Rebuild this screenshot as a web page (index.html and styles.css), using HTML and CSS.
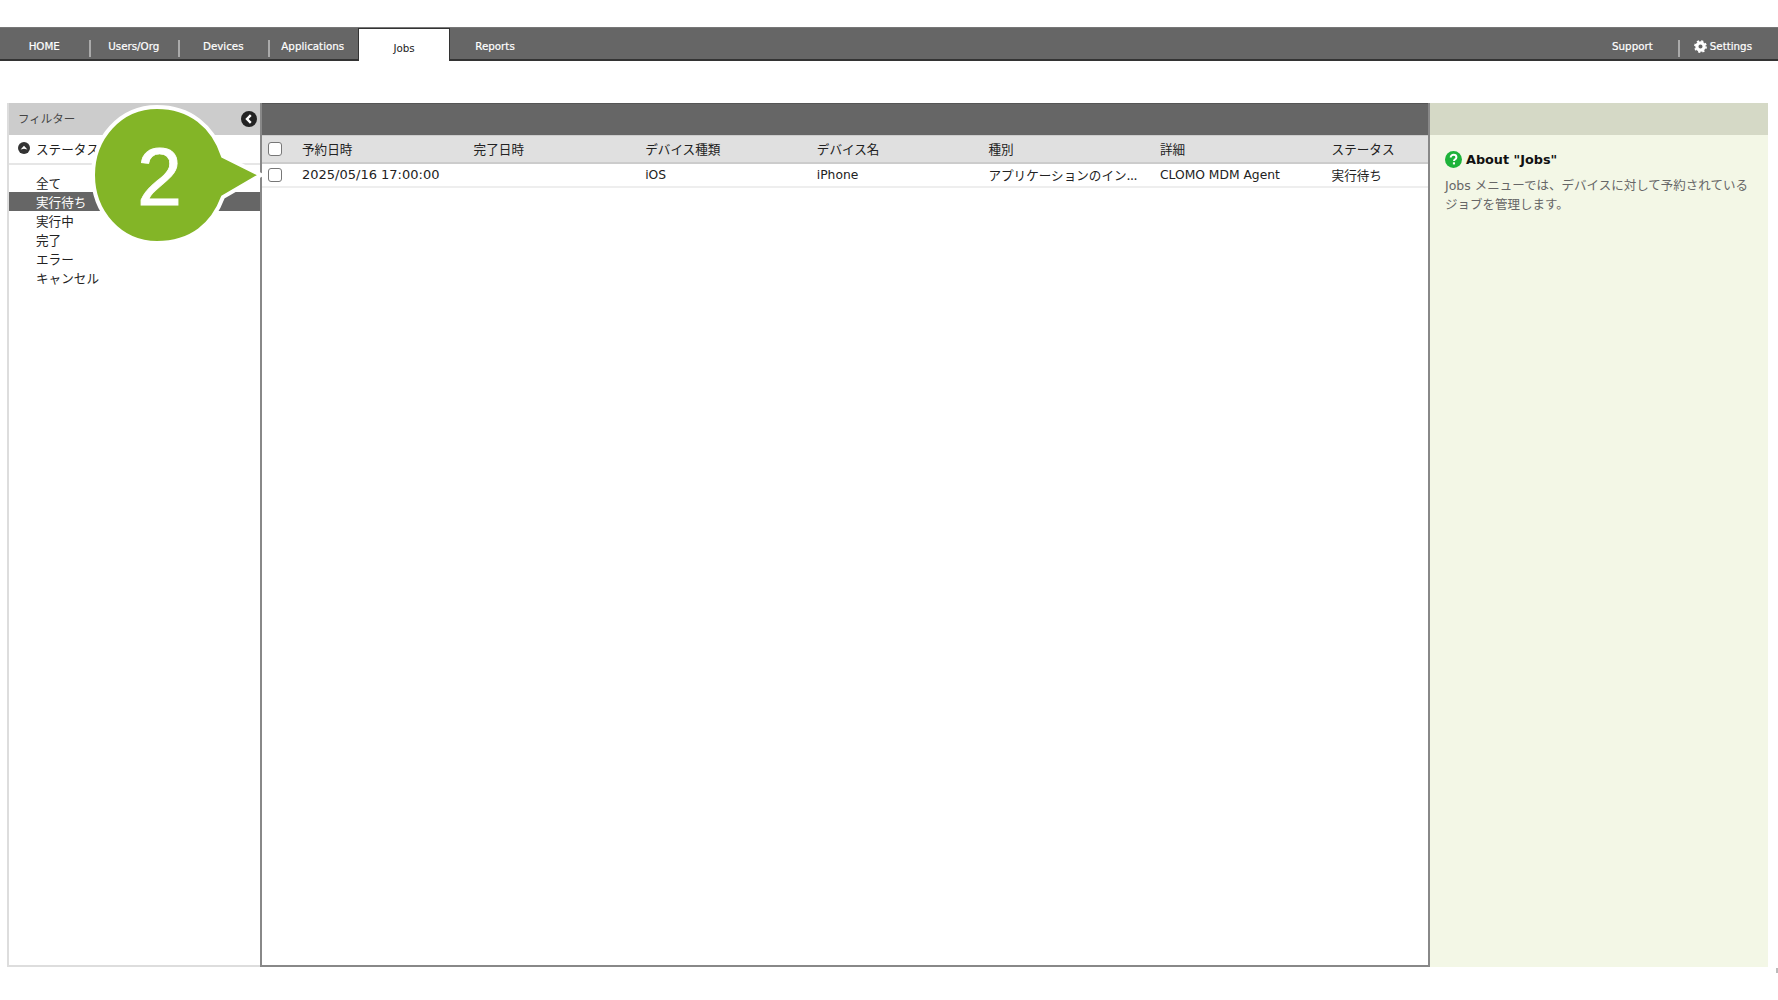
FILE: index.html
```html
<!DOCTYPE html>
<html lang="ja">
<head>
<meta charset="utf-8">
<title>Jobs</title>
<link rel="stylesheet" href="styles.css">
</head>
<body>
<nav class="nav">
  <a class="tab sep">HOME</a>
  <a class="tab sep">Users/Org</a>
  <a class="tab sep">Devices</a>
  <a class="tab">Applications</a>
  <a class="tab active">Jobs</a>
  <a class="tab last">Reports</a>
  <span class="nav-space"></span>
  <a class="nav-right sep-right">Support</a>
  <a class="nav-right settings">
    <svg class="gear" viewBox="0 0 14 14"><circle cx="7" cy="7" r="3.900" fill="none" stroke="#fff" stroke-width="3.400"/><circle cx="7" cy="7" r="6" fill="none" stroke="#fff" stroke-width="1.800" stroke-dasharray="2.400 2.310"/></svg>
    Settings
  </a>
</nav>

<main class="panels">
  <aside class="filter">
    <header class="filter-head">
      <span>フィルター</span>
      <svg class="collapse" viewBox="0 0 16 16"><circle cx="8" cy="8" r="8" fill="#222"/><path d="M9.800 4.200 6 8l3.800 3.800" fill="none" stroke="#fff" stroke-width="2.400"/></svg>
    </header>
    <div class="filter-section">
      <svg class="up" viewBox="0 0 12 12"><circle cx="6" cy="6" r="6" fill="#333"/><path d="M2.600 7.600 6 3.800l3.400 3.800-3.400-.8z" fill="#fff"/></svg>
      <span>ステータス</span>
    </div>
    <ul class="filter-list">
      <li>全て</li>
      <li class="selected">実行待ち</li>
      <li>実行中</li>
      <li>完了</li>
      <li>エラー</li>
      <li>キャンセル</li>
    </ul>
  </aside>

  <section class="jobs">
    <div class="jobs-bar"></div>
    <table class="grid">
      <colgroup>
        <col class="c-check"><col class="c-col"><col class="c-col"><col class="c-col"><col class="c-col"><col class="c-col"><col class="c-col"><col>
      </colgroup>
      <thead>
        <tr>
          <th><span class="box"></span></th>
          <th>予約日時</th><th>完了日時</th><th>デバイス種類</th><th>デバイス名</th><th>種別</th><th>詳細</th><th>ステータス</th>
        </tr>
      </thead>
      <tbody>
        <tr>
          <td><span class="box"></span></td>
          <td class="date">2025/05/16 17:00:00</td><td></td><td class="latin">iOS</td><td class="latin">iPhone</td><td>アプリケーションのイン...</td><td class="latin">CLOMO MDM Agent</td><td>実行待ち</td>
        </tr>
      </tbody>
    </table>
  </section>

  <aside class="about">
    <div class="about-bar"></div>
    <div class="about-body">
      <h2 class="about-title">
        <svg class="help" viewBox="0 0 17 17"><circle cx="8.500" cy="8.500" r="8.500" fill="#1db33a"/><path d="M5.700 6.500c0-1.800 1.300-2.700 2.900-2.700s2.800.9 2.800 2.400c0 1.300-.8 1.800-1.500 2.300-.6.400-.9.700-.9 1.500" fill="none" stroke="#fff" stroke-width="2"/><rect x="7.900" y="11.300" width="2.100" height="2.100" fill="#fff"/></svg>
        About "Jobs"
      </h2>
      <p class="about-text">Jobs メニューでは、デバイスに対して予約されているジョブを管理します。</p>
    </div>
  </aside>
</main>

<div class="callout">
  <svg class="callout-shape" viewBox="0 0 176 142"><path d="M68 3C101 3 124 22 134 52L172 71 134 93C124 120 103 139 68 139 31 139 4 108 4 71 4 34 31 3 68 3Z" fill="#83b527" stroke="#fff" stroke-width="4"/></svg>
  <span class="callout-num">2</span>
</div>
<span class="corner-mark"></span>
```

FILE: styles.css
```css
* { box-sizing: border-box; }
html, body { margin: 0; padding: 0; background: #fff; }
body {
  height: 1000px;
  overflow: hidden;
  padding-top: 27px;
  font-family: "DejaVu Sans", "Noto Sans CJK JP", sans-serif;
  color: #222;
}

.nav {
  display: flex;
  align-items: stretch;
  height: 34px;
  background: #666;
  border-top: 1px solid #777;
  border-bottom: 2px solid #333;
}
.tab {
  position: relative;
  display: flex;
  align-items: center;
  justify-content: center;
  width: 89.500px;
  padding: 5px 1px 0 0;
  color: #fff;
  font-size: 10.300px;
  -webkit-text-stroke: 0.2px #fff;
}
.tab.sep::after, .sep-right::after {
  content: "";
  position: absolute;
  right: -1px;
  top: 12px;
  height: 17px;
  width: 2px;
  background: #aaa;
}
.sep-right::after { right: -2px; }
.tab.active {
  width: 92px;
  margin-bottom: -2px;
  color: #222;
  background: #fff;
  border: 1px solid #333;
  border-bottom: 0;
  padding: 6px 0 0;
  -webkit-text-stroke: 0;
}
.tab.last { width: 90px; padding-right: 0; }
.nav-space { flex: 1; }
.nav-right {
  position: relative;
  display: flex;
  align-items: center;
  padding-top: 5px;
  color: #fff;
  font-size: 10.300px;
  -webkit-text-stroke: 0.2px #fff;
}
.sep-right { padding-right: 25px; }
.settings { padding-left: 16px; padding-right: 26px; gap: 3px; }
.gear { width: 13px; height: 13px; }

.panels {
  display: flex;
  height: 864px;
  margin: 42px 10px 0 7px;
}

.filter {
  width: 253px;
  display: flex;
  flex-direction: column;
  border-left: 2px solid #ddd;
  border-bottom: 2px solid #ddd;
  font-family: "Noto Sans CJK JP", sans-serif;
  font-size: 12.600px;
}
.filter-head {
  display: flex;
  align-items: center;
  justify-content: space-between;
  height: 32px;
  padding: 0 3px 2px 9px;
  background: #ccc;
  color: #444;
  font-size: 11.500px;
}
.collapse { width: 16px; height: 16px; margin-top: 2px; }
.filter-section {
  display: flex;
  align-items: center;
  gap: 6px;
  height: 30px;
  padding: 0 0 2px 9px;
  border-bottom: 2px solid #e6e6e6;
}
.up { width: 12px; height: 12px; }
.filter-list {
  list-style: none;
  margin: 0;
  padding: 8px 0 0;
}
.filter-list li {
  height: 19px;
  line-height: 19px;
  padding-left: 27px;
}
.filter-list .selected { background: #666; color: #fff; }

.jobs {
  width: 1170px;
  display: flex;
  flex-direction: column;
  border-left: 2px solid #888;
  border-right: 2px solid #888;
  border-bottom: 2px solid #888;
}
.jobs-bar {
  height: 33px;
  background: #666;
  border-top: 1px solid #555;
  border-bottom: 1px solid #ccc;
}
.grid {
  width: 100%;
  table-layout: fixed;
  border-collapse: collapse;
  font-family: "Noto Sans CJK JP", sans-serif;
  font-size: 12.600px;
}
.c-check { width: 40px; }
.c-col { width: 171.600px; }
.grid th {
  height: 27px;
  padding: 0 18px 2px 0;
  text-align: left;
  font-weight: 400;
  background: #e0e0e0;
  border-bottom: 2px solid #ccc;
}
.grid td {
  height: 24px;
  padding: 0 10px 0 0;
  border-bottom: 2px solid #eee;
  white-space: nowrap;
  line-height: 16px;
  font-family: "Noto Sans CJK JP", sans-serif;
}
.grid .latin {
  font-family: "DejaVu Sans", sans-serif;
  font-size: 12.300px;
}
.grid .date {
  font-family: "DejaVu Sans", sans-serif;
  font-size: 13px;
}
.grid th:first-child, .grid td:first-child { padding: 0 0 0 6px; }
.box {
  display: block;
  width: 14px;
  height: 14px;
  border: 1px solid #777;
  border-radius: 3px;
  background: #fff;
}

.about {
  flex: 1;
  display: flex;
  flex-direction: column;
  background: #f3f7e6;
}
.about-bar { height: 32px; background: #d5d9c6; }
.about-body { padding: 16px 15px; }
.about-title {
  display: flex;
  align-items: center;
  gap: 4px;
  margin: 0;
  font-size: 12.800px;
  font-weight: 700;
  color: #111;
}
.help { width: 17px; height: 17px; }
.about-text {
  margin: 8px 0 0;
  font-size: 12.500px;
  line-height: 19px;
  color: #666;
  font-family: "DejaVu Sans", "Noto Sans CJK JP", sans-serif;
}

.callout {
  position: absolute;
  left: 89px;
  top: 104px;
  width: 176px;
  height: 142px;
}
.callout-shape { display: block; width: 176px; height: 142px; }
.callout-num {
  position: absolute;
  left: 48px;
  top: 27px;
  font-family: "Liberation Sans", sans-serif;
  font-size: 81px;
  line-height: 92px;
  color: #fff;
  -webkit-text-stroke: 0.8px #fff;
}
.corner-mark {
  position: absolute;
  right: 0;
  top: 968px;
  width: 2px;
  height: 5px;
  background: #bbb;
}
```
